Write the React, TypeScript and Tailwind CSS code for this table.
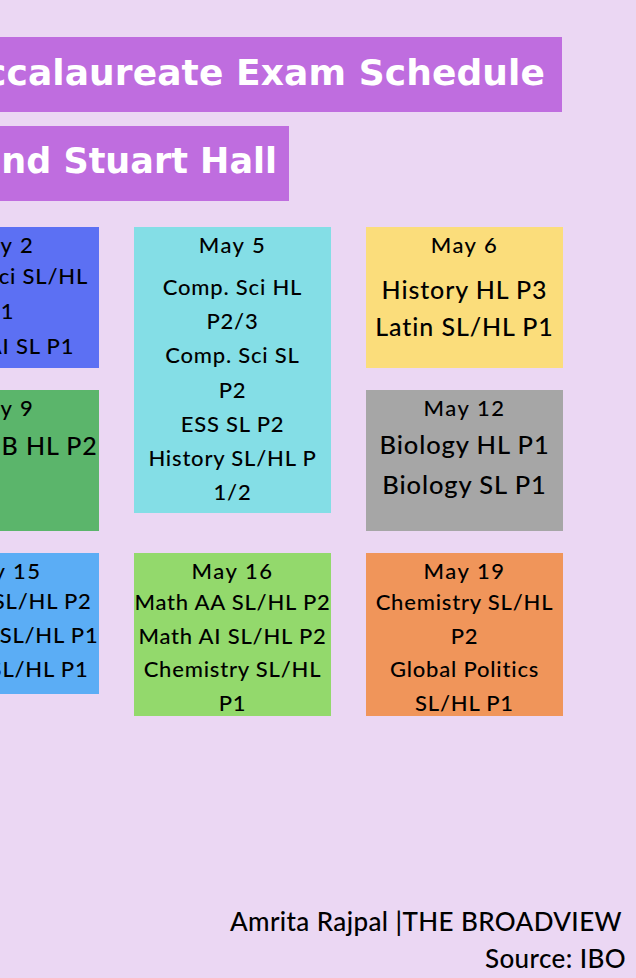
import React from "react";

type Box = { date: string; lines: string[]; bg: string; h: string; lineCls: string };

const body = { fontFamily: "Lato, 'Noto Sans', sans-serif" };
const title = { fontFamily: "'DejaVu Sans', 'Open Sans', sans-serif" };

function Card({ b }: { b: Box }) {
  return (
    <div className={`${b.bg} ${b.h} flex flex-col items-center text-center text-black overflow-hidden whitespace-nowrap font-medium`} style={body}>
      <div className="text-[22px] leading-[34px] tracking-[1.5px] mt-[1px]">{b.date}</div>
      <div className={b.lineCls}>
        {b.lines.map((l, i) => (
          <div key={i}>{l}</div>
        ))}
      </div>
    </div>
  );
}

export default function App() {
  const small = "text-[22px] tracking-[0.8px]";
  const col1: Box[] = [
    { date: "May 2", lines: ["Comp. Sci SL/HL", "P1", "Math AI SL P1"], bg: "bg-[#5c70f3]", h: "h-[141px]", lineCls: `${small} leading-[35px] -mt-[4px]` },
    { date: "May 9", lines: ["Spanish B HL P2"], bg: "bg-[#5bb56b]", h: "h-[141px]", lineCls: "text-[25px] tracking-[0.9px] leading-[38px] mt-[1px]" },
    { date: "May 15", lines: ["Physics SL/HL P2", "Business SL/HL P1", "French SL/HL P1"], bg: "bg-[#5badf5]", h: "h-[141px]", lineCls: `${small} leading-[34px] -mt-[4px]` },
  ];
  const may5: Box = {
    date: "May 5",
    lines: ["Comp. Sci HL", "P2/3", "Comp. Sci SL", "P2", "ESS SL P2", "History SL/HL P", "1/2"],
    bg: "bg-[#84dee6]",
    h: "h-[286px]",
    lineCls: `${small} leading-[34.2px] mt-[8px]`,
  };
  const may6: Box = { date: "May 6", lines: ["History HL P3", "Latin SL/HL P1"], bg: "bg-[#fbdd7b]", h: "h-[141px]", lineCls: "text-[25px] tracking-[0.9px] leading-[37px] mt-[9px]" };
  const may12: Box = { date: "May 12", lines: ["Biology HL P1", "Biology SL P1"], bg: "bg-[#a6a6a6]", h: "h-[141px]", lineCls: "text-[25.5px] tracking-[0.9px] leading-[40px] -mt-[1px]" };
  const may16: Box = {
    date: "May 16",
    lines: ["Math AA SL/HL P2", "Math AI SL/HL P2", "Chemistry SL/HL", "P1"],
    bg: "bg-[#93d96c]",
    h: "h-[163px]",
    lineCls: `${small} leading-[33.7px] -mt-[3px]`,
  };
  const may19: Box = {
    date: "May 19",
    lines: ["Chemistry SL/HL", "P2", "Global Politics", "SL/HL P1"],
    bg: "bg-[#f0955a]",
    h: "h-[163px]",
    lineCls: `${small} leading-[33.7px] -mt-[3px]`,
  };

  return (
    <div className="w-[636px] h-[978px] bg-[#ebd7f3] overflow-hidden flex flex-col">
      <div className="mt-[37px] w-[562px] h-[75px] bg-[#bf6ddf] flex justify-end items-center pr-[17px] overflow-hidden whitespace-nowrap">
        <span className="text-white font-bold text-[36px] tracking-[0.1px] leading-none shrink-0 -mt-[3px]" style={title}>
          International Baccalaureate Exam Schedule
        </span>
      </div>
      <div className="mt-[14px] w-[289px] h-[75px] bg-[#bf6ddf] flex justify-end items-center pr-[12px] overflow-hidden whitespace-nowrap">
        <span className="text-white font-bold text-[35px] leading-none shrink-0 -mt-[5px]" style={title}>
          Convent and Stuart Hall
        </span>
      </div>

      <div className="mt-[26px] ml-[-98px] grid grid-cols-[197px_197px_197px] gap-x-[35px] items-start">
        <div className="flex flex-col gap-[22px]">
          {col1.map((b) => (
            <Card key={b.date} b={b} />
          ))}
        </div>
        <div className="flex flex-col gap-[40px]">
          <Card b={may5} />
          <Card b={may16} />
        </div>
        <div className="flex flex-col gap-[22px]">
          <Card b={may6} />
          <Card b={may12} />
          <Card b={may19} />
        </div>
      </div>

      <div className="mt-auto mb-[1px] pr-[12px] flex flex-col items-end text-black font-medium tracking-[0.4px]" style={body}>
        <div className="text-[26px] leading-[37px] mr-[2px]">Amrita Rajpal |THE BROADVIEW</div>
        <div className="text-[26px] leading-[37px] -mr-[2px]">Source: IBO</div>
      </div>
    </div>
  );
}
